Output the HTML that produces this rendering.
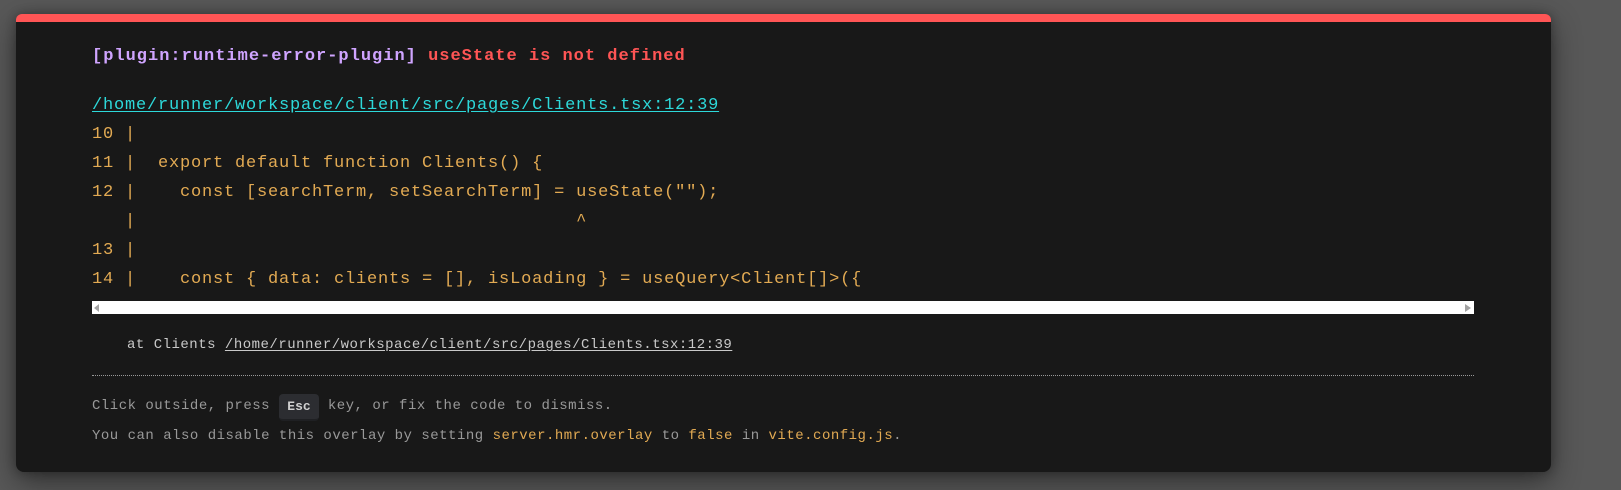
<!DOCTYPE html>
<html><head><meta charset="utf-8"><style>
html,body{margin:0;padding:0;width:1621px;height:490px;overflow:hidden;background:#585858;}
.p{position:absolute;left:16px;top:14px;width:1535px;height:458px;box-sizing:border-box;background:#181818;border-top:8px solid #ff5555;border-radius:6px 6px 8px 8px;box-shadow:0 10px 30px rgba(0,0,0,.45),0 0 10px rgba(0,0,0,.3);}
.t{position:absolute;left:92px;white-space:pre;font-family:"Liberation Mono",monospace;height:28px;line-height:28px;}
.c{font-size:17px;letter-spacing:0.8px;color:#e2aa53;}
.h{font-size:17px;letter-spacing:1.0px;font-weight:bold;}
.f{font-size:14px;letter-spacing:0.5px;color:#999;}
.y{color:#e2aa53}
u{text-underline-offset:2px}
</style></head><body>
<div class="p"></div>
<div class="t h" style="top:43px"><span style="color:#cfa4ff">[plugin:runtime-error-plugin]</span> <span style="color:#ff5555">useState is not defined</span></div>
<div class="t c" style="top:92px;color:#2dd9da"><u>/home/runner/workspace/client/src/pages/Clients.tsx:12:39</u></div>
<div class="t c" style="top:121px">10 |</div>
<div class="t c" style="top:150px">11 |  export default function Clients() {</div>
<div class="t c" style="top:179px">12 |    const [searchTerm, setSearchTerm] = useState("");</div>
<div class="t c" style="top:208px">   |                                        ^</div>
<div class="t c" style="top:237px">13 |</div>
<div class="t c" style="top:266px">14 |    const { data: clients = [], isLoading } = useQuery&lt;Client[]&gt;({</div>
<div style="position:absolute;left:92px;top:301px;width:1382px;height:13px;background:#fff;"></div>
<div style="position:absolute;left:94px;top:304px;width:0;height:0;border-top:4px solid transparent;border-bottom:4px solid transparent;border-right:5px solid #a3a3a3;"></div>
<div style="position:absolute;left:1465px;top:304px;width:0;height:0;border-top:4px solid transparent;border-bottom:4px solid transparent;border-left:6px solid #a3a3a3;"></div>
<div class="t f" style="top:331px;left:127px;color:#c9c9c9">at Clients <u>/home/runner/workspace/client/src/pages/Clients.tsx:12:39</u></div>
<div style="position:absolute;left:92px;top:375px;width:1382px;border-top:1px dotted #999;"></div>
<div class="t f" style="top:392px">Click outside, press <span style="display:inline-block;width:40px;height:1px;"></span> key, or fix the code to dismiss.</div>
<div style="position:absolute;left:279px;top:394px;width:40px;height:27px;box-sizing:border-box;background:#2c2d31;border-radius:4px;border-bottom:2px solid #1f2023;color:#d0d0d0;font:bold 13px/25px 'Liberation Mono',monospace;text-align:center;">Esc</div>
<div class="t f" style="top:422px">You can also disable this overlay by setting <span class="y">server.hmr.overlay</span> to <span class="y">false</span> in <span class="y">vite.config.js</span>.</div>
</body></html>
